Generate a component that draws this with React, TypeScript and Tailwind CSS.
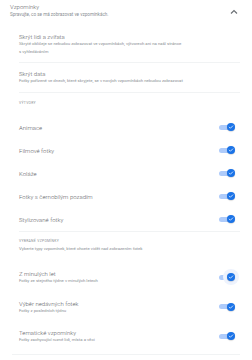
import React from "react";

function Toggle({ halo = false }: { halo?: boolean }) {
  return (
    <div className="relative w-[16px] h-[8px] flex items-center shrink-0">
      <div className="absolute left-[0px] w-[13px] h-[5px] rounded-full bg-[#aecbfa]" />
      {halo && (
        <div className="absolute right-[-4px] w-[16px] h-[16px] rounded-full bg-[#eef3fd]" />
      )}
      <div className="absolute right-0 w-[8px] h-[8px] rounded-full bg-[#1a73e8] flex items-center justify-center shadow-[0_0.5px_1px_rgba(0,0,0,0.25)]">
        <svg width="6" height="6" viewBox="0 0 24 24">
          <path d="M5 12.5l4.5 4.5L19 7.5" fill="none" stroke="white" strokeWidth="3" strokeLinecap="round" strokeLinejoin="round" />
        </svg>
      </div>
    </div>
  );
}

function SimpleRow({ title }: { title: string }) {
  return (
    <div className="h-[23px] flex items-center justify-between pr-[5px]">
      <div className="text-[6px] leading-[7px] font-light text-[#5f6368]">{title}</div>
      <Toggle />
    </div>
  );
}

function SubRow({ title, sub, halo }: { title: string; sub: string; halo?: boolean }) {
  return (
    <div className="h-[29.5px] flex items-center justify-between pr-[5px]">
      <div>
        <div className="text-[6px] leading-[7px] font-light text-[#5f6368]">{title}</div>
        <div className="text-[4.3px] leading-[7.5px] text-[#8a8f94]">{sub}</div>
      </div>
      <Toggle halo={halo} />
    </div>
  );
}

export default function App() {
  return (
    <div
      className="w-[252px] h-[360px] bg-white overflow-hidden"
      style={{ fontFamily: "Roboto, 'Noto Sans', sans-serif" }}
    >
      <div className="flex justify-between pl-[10px] pr-[14px] pt-[2px]">
        <div>
          <div className="text-[6px] leading-[9px] font-light text-[#5f6368]">Vzpomínky</div>
          <div className="mt-[1px] text-[4.6px] leading-[6px] text-[#8a8f94]">
            Spravujte, co se má zobrazovat ve vzpomínkách.
          </div>
        </div>
        <svg width="8" height="6" viewBox="0 0 8 6" className="mt-[7px]">
          <path d="M1 4.5L4 1.6L7 4.5" fill="none" stroke="#6b7075" strokeWidth="1.2" />
        </svg>
      </div>

      <div className="pl-[19px] pr-[12px]">
        <div className="mt-[15px] pb-[7px] border-b border-[#f1f3f4]">
          <div className="text-[6px] leading-[7px] font-light text-[#5f6368]">Skrýt lidi a zvířata</div>
          <div className="text-[4.3px] leading-[7.5px] text-[#8a8f94]">
            Skryté obličeje se nebudou zobrazovat ve vzpomínkách, výtvorech ani na naší stránce
            <br />s vyhledáváním
          </div>
        </div>
        <div className="pt-[7px] pb-[8px] border-b border-[#f1f3f4]">
          <div className="text-[6px] leading-[7px] font-light text-[#5f6368]">Skrýt data</div>
          <div className="text-[4.3px] leading-[7px] text-[#8a8f94]">
            Fotky pořízené ve dnech, které skryjete, se v nových vzpomínkách nebudou zobrazovat
          </div>
        </div>

        <div className="pt-[7px] text-[3.4px] leading-[6px] tracking-[0.3px] text-[#8a8f94] uppercase">
          Výtvory
        </div>
        <div className="mt-[9.5px] border-b border-[#f1f3f4]">
          <SimpleRow title="Animace" />
          <SimpleRow title="Filmové fotky" />
          <SimpleRow title="Koláže" />
          <SimpleRow title="Fotky s černobílým pozadím" />
          <SimpleRow title="Stylizované fotky" />
        </div>

        <div className="pt-[6px] text-[3.4px] leading-[6px] tracking-[0.3px] text-[#8a8f94] uppercase">
          Vybrané vzpomínky
        </div>
        <div className="mt-[1px] text-[4.3px] leading-[7px] text-[#8a8f94]">
          Vyberte typy vzpomínek, které chcete vidět nad zobrazením fotek
        </div>
        <div className="mt-[11px]">
          <SubRow title="Z minulých let" sub="Fotky ze stejného týdne v minulých letech" halo />
          <SubRow title="Výběr nedávných fotek" sub="Fotky z posledních týdnů" />
          <SubRow title="Tematické vzpomínky" sub="Fotky zachycující různé lidi, místa a věci" />
        </div>
      </div>
      <div className="ml-[12px] mr-[12px] mt-[3px] border-b border-[#f1f3f4]" />
    </div>
  );
}
